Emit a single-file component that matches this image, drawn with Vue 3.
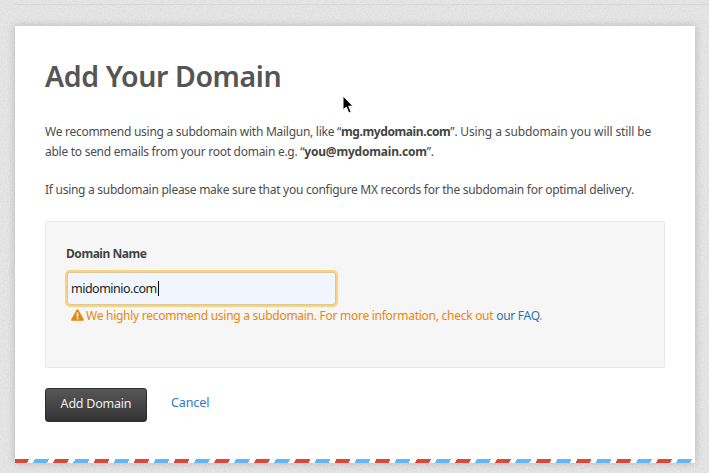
<script setup>
const title = 'Add Your Domain'
</script>

<template>
  <div class="page">
    <svg class="grain" width="709" height="473" aria-hidden="true">
      <filter id="grain"><feTurbulence type="fractalNoise" baseFrequency="0.7" numOctaves="2" seed="4"/><feColorMatrix values="0 0 0 0 0.5  0 0 0 0 0.5  0 0 0 0 0.5  0.5 0 0 0 -0.12"/></filter>
      <rect width="709" height="473" filter="url(#grain)"/>
    </svg>
    <div class="topline"></div>
    <main class="card">
      <h1>{{ title }}</h1>
      <p class="intro">We recommend using a subdomain with Mailgun, like “<b>mg.mydomain.com</b>”. <span class="wide">Using a subdomain you will still be</span> able to send emails from your root domain e.g. “<b class="you">you@mydomain.com</b>”.</p>
      <p class="note">If using a subdomain please make sure that you configure MX records for the subdomain for optimal delivery.</p>
      <section class="panel">
        <label class="label">Domain Name</label>
        <div class="input"><span>midominio.com</span><i class="caret"></i></div>
        <div class="warn">
          <svg width="13" height="12" viewBox="0 0 13 12"><path d="M6.5.3c.4 0 .7.2.9.5l5.3 9.500c.4.7-.1 1.500-.9 1.500H1.200c-.8 0-1.300-.8-.9-1.500L5.600.8c.2-.3.5-.5.9-.5z" fill="#e8870e"/><rect x="5.700" y="3.500" width="1.600" height="4.200" fill="#fff"/><rect x="5.700" y="8.700" width="1.600" height="1.600" fill="#fff"/></svg>
          <span>We highly recommend using a subdomain. For more information, check out <a>our FAQ</a>.</span>
        </div>
      </section>
      <div class="actions">
        <button class="primary">Add Domain</button>
        <a class="cancel">Cancel</a>
      </div>
      <div class="stripes"></div>
    </main>
    <svg class="cursor" width="14" height="20" viewBox="0 0 14 20"><path d="M1 1v14l3.300-3 2.500 6 2.400-1-2.500-5.800H11z" fill="#000" stroke="#fff" stroke-width="1"/></svg>
  </div>
</template>

<style>
html, body { margin: 0; background: #e9e9e9; }
</style>

<style scoped>
.page {
  position: relative;
  width: 709px;
  height: 473px;
  overflow: hidden;
  box-sizing: border-box;
  padding: 4px 0 0 15px;
  background: #e9e9e9;
  font-family: "Noto Sans", sans-serif;
  color: #4d4d4d;
}
.grain { position: absolute; left: 0; top: 0; }
.topline { position: relative; height: 1px; background: #d8d8d8; margin-bottom: 21px; }
.card {
  position: relative;
  box-sizing: border-box;
  width: 680px;
  height: 437px;
  padding: 30px 30px 0;
  background: #fff;
  box-shadow: 0 0 8px rgba(0, 0, 0, .2);
}
h1 {
  margin: 0;
  font-size: 28.500px;
  line-height: 41px;
  font-weight: 600;
  color: #555;
  letter-spacing: -.4px;
}
p {
  margin: 0;
  font-size: 12px;
  line-height: 20px;
  letter-spacing: -.27px;
}
.intro { margin-top: 25px; }
.note { margin-top: 18px; }
b { font-weight: 700; color: #444; letter-spacing: -.4px; }
.intro .wide { letter-spacing: -.1px; }
.intro .you { letter-spacing: -.2px; }
.panel {
  box-sizing: border-box;
  height: 147px;
  margin-top: 21px;
  padding: 23px 20px 0;
  background: #f6f6f6;
  border: 1px solid #e8e8e8;
  border-radius: 2px;
}
.label {
  display: block;
  font-size: 12px;
  line-height: 18px;
  font-weight: 700;
  letter-spacing: -.45px;
  color: #444;
}
.input {
  display: flex;
  align-items: center;
  box-sizing: border-box;
  width: 269px;
  height: 33px;
  margin: 9px 0 0 1px;
  padding-left: 3px;
  background: #f1f5fe;
  border: 1px solid #d9c99a;
  border-radius: 3px;
  box-shadow: 0 0 0 2px #fdd27c;
  font-size: 12.500px;
  letter-spacing: -.5px;
  color: #222;
}
.caret { width: 1px; height: 15px; background: #000; margin-left: 1px; }
.warn {
  display: flex;
  align-items: center;
  gap: 2px;
  margin: 1px 0 0 5px;
  height: 18px;
  font-size: 12px;
  letter-spacing: -.27px;
  color: #e8870e;
}
.warn a { color: #2a72b5; }
.actions { display: flex; align-items: center; gap: 24px; margin-top: 20px; }
.primary {
  box-sizing: border-box;
  width: 102px;
  height: 34px;
  padding: 0 0 3px;
  border: 1px solid #2e2e2e;
  border-radius: 3px;
  background: linear-gradient(#575757, #333);
  color: #eee;
  font-family: inherit;
  font-size: 12.500px;
  letter-spacing: -.22px;
}
.cancel { margin-bottom: 6px; font-size: 12.500px; letter-spacing: -.1px; color: #2f78c8; }
.stripes {
  position: absolute;
  left: 0;
  right: 0;
  bottom: 0;
  height: 4px;
  background: repeating-linear-gradient(117deg, #d9483b 0 12.500px, #fff 12.500px 17.900px, #64b5f6 17.900px 30.400px, #fff 30.400px 35.800px);
}
.cursor { position: absolute; left: 342px; top: 95px; }
</style>
